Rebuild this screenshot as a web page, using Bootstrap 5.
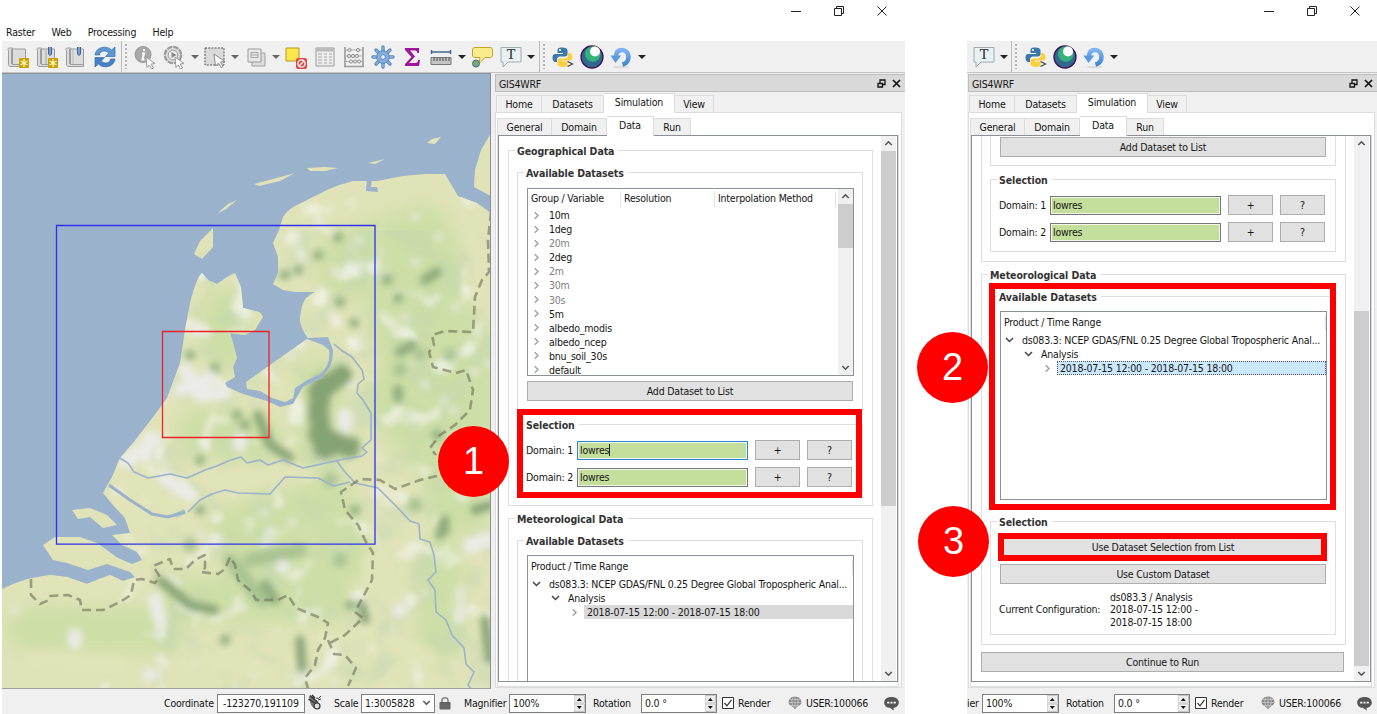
<!DOCTYPE html>
<html lang="en">
<head>
<meta charset="utf-8">
<title>GIS4WRF</title>
<link href="https://cdn.jsdelivr.net/npm/bootstrap@5.3.0/dist/css/bootstrap.min.css" rel="stylesheet">
<script src="https://cdn.jsdelivr.net/npm/bootstrap@5.3.0/dist/js/bootstrap.bundle.min.js"></script>
<style>
body{width:1377px;height:714px;overflow:hidden;background:#fff;color:#161616;font:10.5px/14px "DejaVu Sans Condensed","DejaVu Sans",sans-serif;letter-spacing:-.2px;white-space:nowrap}
svg{display:block;flex:none}
.win{height:714px;overflow:hidden}
.win-l{width:903px;margin-left:2px}
.win-r{width:410px;margin-left:62px}
.titlebar{height:22px;padding-right:17px}
.titlebar svg{width:12px;height:12px;margin-left:31px}
.menubar{height:19px;padding:3px 0 0 4px}
.menubar span{margin-right:16.3px}
.toolbar{height:32px;background:#f0f0f0;border-bottom:1px solid #c3c3c3;padding-left:1.5px}
.toolbar .ic{width:29px;display:flex;justify-content:center;flex:none}
.toolbar .ic svg{width:24px;height:24px}
.toolbar .dd{width:11.7px;display:flex;justify-content:center;flex:none}
.toolbar .dd:before{content:"";border:4px solid transparent;border-top:4px solid #222;border-bottom:0}
.toolbar .dd.off:before{border-top-color:#666}
.grip{width:11.4px;flex:none;height:31px;display:flex}
.grip:before{content:"";width:1px;height:31px;margin-left:1.5px;background:#bcbcbc}
.grip:after{content:"";width:2px;height:25px;margin:3px 0 0 3px;background:repeating-linear-gradient(#b4b4b4 0 2px,#f0f0f0 2px 4px)}
.work{height:617px;background:#f0f0f0}
.mapbox{width:489px;height:616px;border-top:1px solid #8f949c;border-right:1px solid #8a8f99;border-bottom:1px solid #a0a0a0;overflow:hidden}
.dock{width:410px}
.dock-title{height:18px;margin-top:1px;background:#d9d9d9;border:1px solid #bdbdbd;border-right:0;padding:1px 4px 0 3px}
.dock-title svg{width:9px;height:9px;margin-left:6px}
.tabs{height:20px}
.tabs span{height:17px;line-height:15px;background:#f0f0f0;border:1px solid #dcdcdc;border-bottom:0;border-left:0;text-align:center;flex:none;padding-top:1px}
.tabs span:first-child{border-left:1px solid #dcdcdc}
.tabs .on{height:20px;background:#fff;position:relative;margin-bottom:-1px;padding-top:1px}
.pane1{width:407px;height:576px;border:1px solid #dcdcdc;background:#fff;padding:2px 0 0 1px}
.pane2{width:402px;height:552px;border:1px solid #dcdcdc;border-top:0}
.scroller{width:400px;height:547px;border:1px solid #8b8f98;background:#fff;overflow:hidden}
.content{width:382px;height:545px;overflow:hidden;padding-left:9px}
.sbar{width:15px;background:#f0f0f0;display:flex;flex-direction:column;flex:none}
.sbar svg{width:15px;height:15px}
.sbar i{display:block;background:#cdcdcd}
.gbox{border:1px solid #dedede}
.gbox>b{display:block;height:0;margin-left:6px}
.gbox>b>span{display:inline-block;position:relative;top:-7px;background:#fff;padding:0 4px 0 2px;letter-spacing:-.08px;color:#333}
.outer{width:365px}
.inner{width:346px;margin-left:8px;padding:0 9px}
.tree{border:1px solid #8b909b;background:#fff;width:327px}
.tree .hd span{border-right:1px solid #e3e3e3;height:16px;flex:none}
.row14{height:14.08px;display:flex;align-items:center}
.row14 svg{width:9px;height:9px}
.dim{color:#808080}
.push{display:block;background:#e1e1e1;border:1px solid #adadad;color:#161616;text-align:center;height:20px;line-height:18px;width:326px}
.small-push{width:45px}
.fld{width:171px;height:19px;line-height:17px;background:#c4df9b;border:1px solid #777;box-shadow:inset 0 0 0 1px #f2f7ea;padding-left:2px}
.fld.focus{border-color:#2c83d8}
.status{height:24px;background:#f0f0f0;padding-top:4px}
.status>*{flex:none;height:19px;line-height:19px}
.edit{background:#fff;border:1px solid #7f7f7f;line-height:17px!important;padding-left:3px}
.spin{display:flex;justify-content:space-between}
.spin svg{width:11px;height:17px}
.frame{position:absolute;border:6px solid red}
.ball{position:absolute;width:71px;height:71px;border-radius:50%;background:red;color:#fff;font:38px/71px "Liberation Sans",sans-serif;text-align:center;letter-spacing:0}
</style>
</head>
<body class="position-relative">
<svg width="0" height="0" class="position-absolute">
<defs>
<linearGradient id="gb" x1="0" y1="0" x2="0" y2="1"><stop offset="0" stop-color="#7fb2f0"/><stop offset="1" stop-color="#3f86d8"/></linearGradient>
<symbol id="scroll" viewBox="0 0 24 24"><path d="M3.500 3h3v16.500h13V4H6.500M3.500 3c-2 0-2 2-1 2.500v14c0 1.500 1 2 2.500 2h14.500v-2" fill="#dcdcdc" stroke="#9c9c9c"/><path d="M5.500 4v15" stroke="#a0a0a0"/></symbol>
<symbol id="star" viewBox="0 0 10 10"><rect width="10" height="10" rx="1" fill="#c8a000"/><path d="M5 1v8M1.500 3l7 4M8.500 3l-7 4" stroke="#fff8c0" stroke-width="1.300"/></symbol>
<symbol id="newlay" viewBox="0 0 24 24"><use href="#scroll"/><use href="#star" x="13" y="13" width="10" height="10"/></symbol>
<symbol id="pin" viewBox="0 0 24 24"><path d="M13.500 2v7q1.500 3 3 0V2" fill="#7ba0cc" stroke="#3d6596"/></symbol>
<symbol id="newmark" viewBox="0 0 24 24"><use href="#scroll"/><path d="M11 5v14" stroke="#aaa"/><use href="#pin"/><use href="#star" x="13" y="13" width="10" height="10"/></symbol>
<symbol id="mark" viewBox="0 0 24 24"><use href="#scroll"/><path d="M9 5v14" stroke="#bbb"/><use href="#pin"/></symbol>
<symbol id="refresh" viewBox="0 0 24 24"><path d="M2 10C3 1.500 14 0 18.500 5L22 2v9.500h-9.500l3.200-3.500C12 4.500 7 6 6.500 10z" fill="#5f97d0" stroke="#346faf" stroke-width=".7"/><path d="M22 14C21 22.500 10 24 5.500 19L2 22v-9.500h9.500L8.300 16c3.700 3.500 8.700 2 9.200-2z" fill="#4682c3" stroke="#346faf" stroke-width=".7"/></symbol>
<symbol id="ptr" viewBox="0 0 24 24"><path d="M13 12l9 6.500-3.800.5 2.300 4-2 1-2.200-4-2.300 2.500z" fill="#fff" stroke="#999"/></symbol>
<symbol id="info" viewBox="0 0 24 24"><circle cx="10" cy="9.500" r="8" fill="#a9a9a9" stroke="#979797"/><path d="M11 4v2M9 8.500h2l-1.500 6h2" stroke="#fff" stroke-width="2" fill="none"/><use href="#ptr"/></symbol>
<symbol id="act" viewBox="0 0 24 24"><circle cx="11" cy="10" r="8" fill="#dcdcdc" stroke="#9b9b9b" stroke-width="2.600" stroke-dasharray="5.300 1"/><circle cx="11" cy="10" r="7" fill="#dcdcdc"/><circle cx="11" cy="10" r="4.800" fill="#eee" stroke="#999"/><path d="M9.500 7l5 3-5 3z" fill="#888"/><use href="#ptr"/></symbol>
<symbol id="sel" viewBox="0 0 24 24"><path d="M2 3h19v17H2z" fill="#dadada" stroke="#555" stroke-dasharray="2 1.200"/><path d="M11 9l11 7.500-4.500.5 2.500 4.500-2 1-2.500-4.500-3 3z" fill="#fff" stroke="#888"/></symbol>
<symbol id="form" viewBox="0 0 24 24"><path d="M8 8h13v13H8z" fill="#ddd" stroke="#a0a0a0"/><path d="M4 4h13v13H4z" fill="#e8e8e8" stroke="#9a9a9a"/><path d="M7 7.500h7v5H7zM7 10h7" fill="none" stroke="#a5a5a5"/></symbol>
<symbol id="desel" viewBox="0 0 24 24"><path d="M2 3h13v13H2z" fill="#fbe64b" stroke="#b89b1a"/><rect x="12" y="13" width="11" height="11" rx="2" fill="#e04848"/><circle cx="17.500" cy="18.500" r="3.600" fill="none" stroke="#fff" stroke-width="1.300"/><path d="M15 21l5-5" stroke="#fff" stroke-width="1.300"/></symbol>
<symbol id="tab" viewBox="0 0 24 24"><path d="M3 3h18v18H3z" fill="#ececec" stroke="#9a9a9a"/><path d="M3 5h18" stroke="#bbb" stroke-width="3"/><path d="M5 9h4M11 9h3M16 9h3M5 12h4M11 12h3M16 12h3M5 15h4M11 15h3M16 15h3M5 18h4M11 18h3M16 18h3" stroke="#aaa"/></symbol>
<symbol id="abac" viewBox="0 0 24 24"><path d="M3 2v20M21 2v20M2 21.500h20" stroke="#9a9a9a" stroke-width="1.600"/><path d="M3 5h18M3 11h18M3 16.500h18" stroke="#aaa"/><g fill="#e8e8e8" stroke="#8f8f8f"><circle cx="7.500" cy="5" r="1.600"/><circle cx="16" cy="5" r="1.600"/><circle cx="7" cy="11" r="1.600"/><circle cx="11" cy="11" r="1.600"/><circle cx="15" cy="11" r="1.600"/><circle cx="9" cy="16.500" r="1.600"/><circle cx="13" cy="16.500" r="1.600"/><circle cx="17" cy="16.500" r="1.600"/></g></symbol>
<symbol id="gear" viewBox="0 0 24 24"><path d="M12 2v20M2 12h20M5 5l14 14M19 5L5 19" stroke="#5588c4" stroke-width="3.400" stroke-linecap="round"/><path d="M12 2.500v19M2.500 12h19M5.300 5.300l13.400 13.400M18.700 5.300L5.300 18.700" stroke="#86addb" stroke-width="1.800" stroke-linecap="round"/><circle cx="12" cy="12" r="6.300" fill="#86addb" stroke="#5588c4"/><circle cx="12" cy="12" r="2.400" fill="#f0f0f0" stroke="#5588c4"/></symbol>
<symbol id="sigma" viewBox="0 0 24 24"><path d="M5 3h14v5h-1.500c-.5-2-1.500-2.500-3-2.500H10l5 6-6 6.500h6c2 0 2.800-1 3.300-3H20l-1 6H5v-2l6.500-7L5 5z" fill="#a0149a"/></symbol>
<symbol id="ruler" viewBox="0 0 24 24"><path d="M2.500 7h19M2.500 5v4M21.500 5v4" stroke="#44678f" stroke-width="1.500"/><path d="M2 12.500h20v7H2z" fill="#c4c4c4" stroke="#777"/><path d="M5 13v3M8 13v3M11 13v3M14 13v3M17 13v3M20 13v3" stroke="#444"/></symbol>
<symbol id="tip" viewBox="0 0 24 24"><path d="M5 2.500h15c1.500 0 2.500 1 2.500 2.500v5c0 1.500-1 2.500-2.500 2.500h-5l-6 6 1-6H5c-1.500 0-2.500-1-2.500-2.500V5c0-1.500 1-2.500 2.500-2.500z" fill="#faec8c" stroke="#c2a52c"/><circle cx="6" cy="18.500" r="3.500" fill="#79a877" stroke="#4c6f80"/></symbol>
<symbol id="txt" viewBox="0 0 24 24"><path d="M2 2.500h20v14.500H9l-5 5v-5H2z" fill="#e8f1f4" stroke="#a0abae"/><text x="12" y="14" font-family="Liberation Serif,serif" font-size="14" text-anchor="middle" fill="#333" stroke="#333" stroke-width=".2">T</text></symbol>
<symbol id="py" viewBox="0 0 24 24"><path d="M11 2.500c-4 0-4.500 1.500-4.500 3V8h5.500v1H4.500C2 9 1.500 11 1.500 13s1 4 3 4H6v-2.500C6 12.500 7.500 11.500 9 11.500h5c1.500 0 2.500-1 2.500-2.500V5.500c0-2-2-3-5.500-3z" fill="#3b77a8"/><path d="M12 22c4 0 4.500-1.500 4.500-3v-2.500H11v-1h7.500c2.500 0 3-1.500 3-3.500s-1-4-3-4H17v2.500c0 2-1.500 3-3 3H9C7.500 13.500 6.500 14.500 6.500 16v3c0 2 2 3 5.500 3z" fill="#fbd03f"/><circle cx="9" cy="5" r="1" fill="#fff"/><path d="M16.500 16.500l5 2.500-5 2.500" fill="none" stroke="#444" stroke-width="1.300"/></symbol>
<symbol id="orb" viewBox="0 0 24 24"><circle cx="12" cy="12" r="11" fill="#30688e" stroke="#431058" stroke-width="1.300"/><circle cx="12.800" cy="9" r="7.800" fill="#35b27c"/><circle cx="15" cy="6.500" r="5" fill="#fff"/></symbol>
<symbol id="undo" viewBox="0 0 24 24"><ellipse cx="12" cy="22" rx="8" ry="1.300" fill="#dcdcdc"/><path d="M13.500 19.500C22 17.500 21 5 13 5 9 5 7.200 7.500 7 11" fill="none" stroke="url(#gb)" stroke-width="4.600"/><path d="M1.500 10.500h10.800l-5.800 7.500z" fill="#5b98e2"/></symbol>
<symbol id="min" viewBox="0 0 12 12"><path d="M1 6.500h10" stroke="#222"/></symbol>
<symbol id="max" viewBox="0 0 12 12"><path d="M1.500 3.500h7v7h-7zM3.500 3V1.500h7v7H9" fill="none" stroke="#222"/></symbol>
<symbol id="cls" viewBox="0 0 12 12"><path d="M1.500 1.500l9 9M10.500 1.500l-9 9" stroke="#222"/></symbol>
<symbol id="float" viewBox="0 0 9 9"><path d="M3 1h5v4.500H3z" fill="none" stroke="#111" stroke-width="1.300"/><path d="M1 4.500h4.500v3.500H1z" fill="#d9d9d9" stroke="#111" stroke-width="1.300"/></symbol>
<symbol id="xx" viewBox="0 0 9 9"><path d="M1 1l7 7M8 1L1 8" stroke="#111" stroke-width="1.700"/></symbol>
<symbol id="up" viewBox="0 0 15 15"><path d="M4.300 9l3.200-3.200L10.700 9" fill="none" stroke="#555" stroke-width="1.600"/></symbol>
<symbol id="dn" viewBox="0 0 15 15"><path d="M4.300 6l3.200 3.200L10.700 6" fill="none" stroke="#555" stroke-width="1.600"/></symbol>
<symbol id="rt" viewBox="0 0 9 9"><path d="M2.700 1.200L6 4.500 2.700 7.800" fill="none" stroke="#a0a0a0" stroke-width="1.400"/></symbol>
<symbol id="ex" viewBox="0 0 9 9"><path d="M1 2L4.500 5.500 8 2" fill="none" stroke="#444" stroke-width="1.500"/></symbol>
<symbol id="spn" viewBox="0 0 11 17"><path d="M0 .5h10.500v7.500H0zM0 9h10.500v7.500H0z" fill="#ececec" stroke="#c4c4c4"/><path d="M2.800 6L5.300 3l2.500 3zM2.800 11L5.300 14l2.500-3z" fill="#111"/></symbol>
<symbol id="chk" viewBox="0 0 12 12"><path d="M.5.500h11v11H.5z" fill="#fff" stroke="#333"/><path d="M2.500 6l2.500 2.800 4.500-6" fill="none" stroke="#333" stroke-width="1.200"/></symbol>
<symbol id="globe" viewBox="0 0 14 14"><path d="M7 .5c4 0 6.500 3 6.500 6 0 2-3 3.500-5 5L7 13.500l-1.500-2c-2-1.500-5-3-5-5 0-3 2.500-6 6.500-6z" fill="#8b8b8b"/><path d="M.5 6.500h13M7 .5v12M2 3.500h10M2.500 9.500h9M4.500 1.500q-2 5 1 10M9.500 1.500q2 5-1 10" stroke="#d5d5d5" stroke-width=".6" fill="none"/></symbol>
<symbol id="say" viewBox="0 0 14 14"><path d="M7 1c4 0 6.800 2 6.800 5S11 11 9 11v2.500L5.500 11C2.500 11 .2 9 .2 6S3 1 7 1z" fill="#555"/><path d="M3 5.300h2v1.600H3zM6 5.300h2v1.600H6zM9 5.300h2v1.600H9z" fill="#fff"/></symbol>
<symbol id="mouse" viewBox="0 0 16 16"><path d="M2 2l4 1 5 6c2 3-1 6-4 5s-5-8-5-12z" fill="#777"/><path d="M3 1.500l8 7M1.500 5l8 5M5 1l3 3" stroke="#333" stroke-width="1.400"/><circle cx="10" cy="12" r="3" fill="#ddd" stroke="#333" stroke-width="1.200"/><path d="M9 4q2 2 5-2M11 6l3-1" stroke="#444" fill="none"/></symbol>
<symbol id="lock" viewBox="0 0 12 14"><path d="M3 6.500V4.500C3 .8 9 .8 9 4.500v2" fill="none" stroke="#888" stroke-width="1.600"/><rect x=".5" y="6" width="11" height="7.500" rx="1" fill="#5f5f5f"/><path d="M1 8h10M1 10h10M1 12h10" stroke="#777" stroke-width=".7"/></symbol>
</defs>
</svg>

<div class="d-flex">
<div class="win win-l">
 <div class="titlebar d-flex justify-content-end align-items-center"><svg><use href="#min"/></svg><svg><use href="#max"/></svg><svg><use href="#cls"/></svg></div>
 <div class="menubar d-flex"><span>Raster</span><span>Web</span><span>Processing</span><span>Help</span></div>
 <div class="toolbar d-flex align-items-center">
  <div class="ic"><svg><use href="#newlay"/></svg></div><div class="ic"><svg><use href="#newmark"/></svg></div><div class="ic"><svg><use href="#mark"/></svg></div><div class="ic"><svg><use href="#refresh"/></svg></div>
  <div class="grip"></div>
  <div class="ic"><svg><use href="#info"/></svg></div><div class="ic"><svg><use href="#act"/></svg></div><div class="dd off"></div>
  <div class="ic"><svg><use href="#sel"/></svg></div><div class="dd off"></div><div class="ic"><svg><use href="#form"/></svg></div><div class="dd off"></div>
  <div class="ic"><svg><use href="#desel"/></svg></div><div class="ic"><svg><use href="#tab"/></svg></div><div class="ic"><svg><use href="#abac"/></svg></div><div class="ic"><svg><use href="#gear"/></svg></div><div class="ic"><svg><use href="#sigma"/></svg></div><div class="ic"><svg><use href="#ruler"/></svg></div><div class="dd"></div>
  <div class="ic"><svg><use href="#tip"/></svg></div><div class="ic"><svg><use href="#txt"/></svg></div><div class="dd"></div>
  <div class="grip"></div>
  <div class="ic"><svg><use href="#py"/></svg></div><div class="ic"><svg><use href="#orb"/></svg></div><div class="ic"><svg><use href="#undo"/></svg></div><div class="dd"></div>
 </div>
 <div class="work d-flex">
  <div class="mapbox me-1">
   <svg width="489" height="615" viewBox="2 74 489 615">
    <defs>
     <clipPath id="land"><path d="M491 213L477 203 458 196Q452 186 445 174L425 174 403 176 377 181 353 181Q340 184 327 190L297 205Q287 210 283 217L279 230 273 243 278 257 278 273 273 284 283 290 295 292 315 292Q305 296 302 306L300 317Q299 326 308 338L328 337 333 350Q333 360 330 367L322 378 303 387 297 397 293 404 280 407 267 401 243 394 227 387 225 383 235 377 233 367 237 358 233 343 230 333 245 335 255 330 263 317Q261 311 255 311L243 308 241 287 235 273 227 277 217 284 208 280 202 273Q197 276 190 303L185 330 180 363 167 398Q160 408 153 417L133 443 120 458 112 477 103 493 113 505 125 518 130 533 112 535 122 545 137 552 142 560 132 564 118 558 97 543 80 537 55 537 43 545 53 560 67 563 88 570 107 564 130 572 135 577 123 581 110 575Q98 579 87 584L67 577 50 575 27 579Q14 583 2 589V690H491z"/><path d="M307 339L287 353 263 370 246 382 247 389 260 391 272 398 285 402 293 398 295 388 307 380 320 374Q331 365 329 350L323 345zM491 133L481 150 475 170 474 187 491 196zM213 228V247L202 259 194 254 200 241zM218 213L228 204 237 200 226 209zM254 184L273 179 295 173 280 181 259 186zM307 168L325 167 338 168 325 171 310 171zM368 163L385 159 375 164zM427 143L432 139 441 137 435 144zM72 510L90 508 107 515 117 525 103 528 90 517 78 519z"/></clipPath>
     <filter id="b3" x="-20%" y="-20%" width="140%" height="140%"><feGaussianBlur stdDeviation="3.500"/></filter>
     <filter id="b6" x="-20%" y="-20%" width="140%" height="140%"><feGaussianBlur stdDeviation="9"/></filter>
     <filter id="b1"><feGaussianBlur stdDeviation=".7"/></filter>
     <filter id="ng" x="0" y="0" width="100%" height="100%"><feTurbulence type="fractalNoise" baseFrequency=".032" numOctaves="2" seed="7"/><feColorMatrix values="0 0 0 0 .55  0 0 0 0 .67  0 0 0 0 .45  3.800 0 0 0 -1.850"/><feGaussianBlur stdDeviation="1.500"/></filter>
     <filter id="nw" x="0" y="0" width="100%" height="100%"><feTurbulence type="fractalNoise" baseFrequency=".035" numOctaves="2" seed="23"/><feColorMatrix values="0 0 0 0 .92  0 0 0 0 .92  0 0 0 0 .9  0 5 0 0 -2.900"/><feGaussianBlur stdDeviation="2"/></filter>
    </defs>
    <path fill="#9ab2cc" d="M2 74h489v615H2z"/>
    <g filter="url(#b1)"><g clip-path="url(#land)">
     <path fill="#e0e3b8" d="M2 74h489v615H2z"/>
     <g filter="url(#b6)" fill="none" stroke="#cddea6" stroke-linecap="round" stroke-linejoin="round"><path stroke-width="70" d="M350 265L420 240 445 330 400 400 440 450 400 300M460 350V500"/><path stroke-width="46" d="M200 430L260 440M230 530L330 500 350 560 250 560M180 600L330 600M30 630H160M440 560V640M225 310V345M320 380V450"/></g>
     <path filter="url(#ng)" opacity=".5" d="M150 230h341v459H150z"/>
     <path filter="url(#nw)" opacity=".7" d="M100 190h391v499H100z"/>
     <g filter="url(#b3)" fill="none" stroke-linecap="round" stroke-linejoin="round">
      <path stroke="#86a374" stroke-width="20" d="M318 392L342 375M322 385L318 412 324 450M318 435L350 448"/>
      <path stroke="#86a374" stroke-width="9" d="M345 378L320 395M258 415L270 445 290 458M330 452L355 442M445 520L440 535M160 580L190 605 215 610M300 640L302 668M365 620L362 605M485 620L490 660M475 510L490 505"/>
      <path stroke="#8dab7d" stroke-width="10" d="M338 237h.1M318 255h.1M387 280h.1M354 323h.1M340 302h.1M298 270h.1M285 275h.1M425 280L437 272M398 298h.1M400 352L412 345M398 390V398M437 435h.1M200 460h.1M200 510h.1M355 510h.1M445 530h.1M245 425h.1M237 415h.1M265 585L275 600M225 640h.1M350 605h.1M190 355h.1M215 368h.1"/>
      <path stroke="#a9c392" stroke-width="14" d="M250 560L300 550M230 560L262 600M420 355h.1M450 355h.1M340 560h.1M190 545h.1M400 370h.1M330 480h.1M415 505h.1"/>
      <path stroke="#ebebe8" stroke-width="14" d="M198 330h.1M185 370L200 395 225 392M210 378L180 390M125 462L155 440M150 438L145 455M165 478L190 495M283 567h.1M75 635V642M215 540h.1M155 600L160 620M150 675h.1M470 545L488 540M400 610h.1M240 445V440M345 415V425"/>
      <path stroke="#e6e8dc" stroke-width="8" d="M415 217h.1M438 237h.1M415 262h.1M358 240h.1M405 317h.1M456 307h.1M475 372h.1M425 385h.1M453 410h.1M265 513h.1M200 535h.1M292 522h.1M460 590V620M15 610h.1M320 222h.1M335 270h.1M290 355h.1"/>
      <path stroke="#e1e3b8" stroke-width="16" d="M125 475L160 500 180 505M120 500L145 520M40 580L100 590 120 580M210 480L300 472M30 660L120 665M200 660L270 670M370 560V580M390 640L430 660M480 250V300"/>
     </g>
     <path fill="none" stroke="#9ab2cc" stroke-width="3" d="M109 485L130 500 152 514 168 517 185 512"/>
     <path fill="#9ab2cc" d="M367 178L366 191 378 192 377 187 371 187 372 178z"/>
    </g></g>
    <g fill="none" stroke="#9ab2cc" stroke-width="1.600" stroke-linejoin="round">
     <path d="M118 457L128 463 134 472 148 478 170 474 187 478 205 470 217 466 228 461 241 457 247 463 260 460 268 465 283 460 303 468 335 461 345 459 362 456 367 452 362 448 371 440 371 413 363 400 357 393 358 384 364 379 362 370 352 357 341 350 334 344 M188 512L200 500 212 494 225 490 238 493 270 494 285 477 318 478 334 486 350 482 M336 460L345 472 355 483 378 488 390 500 398 508 410 521 419 524 420 539 430 542 434 555 436 572 428 580 435 590 436 612 446 620 452 635 464 648 466 664 474 672 468 685 472 690"/>
     <path stroke-width="5" d="M185 511L175 516" opacity=".5"/>
    </g>
    <g fill="none" stroke="#6f7358" stroke-opacity=".62" stroke-width="2.600" stroke-dasharray="9 5" stroke-linejoin="round">
     <path d="M491 212L488 240 489 272 482 280 475 297 473 332 445 331 432 335 434 345 429 352 433 367 456 373 466 370 473 390 470 410 455 425 440 435 430 448 436 455M437 476L420 480 395 489 380 480 360 479 341 492 345 510 358 525 365 540 373 553 372 580 355 612 363 618 345 635 328 644M31 579V595L40 604 49 600 50 596 68 595 80 600 82 610 103 610 120 602 131 595 134 580 142 579 155 583 160 577 153 566 170 559 173 569 186 569 195 560 205 555 205 568 201 572 218 574 225 569 230 557 235 565 238 580 252 592 256 600 278 600 288 595 296 608 318 617 328 623 325 638 318 650 315 665 305 678 308 689M328 640L334 654 345 655 356 668 348 686"/>
    </g>
    <path d="M56.500 225.500h318.500v318.700H56.500z" fill="none" stroke="#3030ee" stroke-width="1.300"/>
    <path d="M162.500 331.500H269v106H162.500z" fill="none" stroke="#ee2028" stroke-width="1.300"/>
   </svg>
  </div>
  <div class="dock">
   <div class="dock-title d-flex align-items-center"><span class="me-auto">GIS4WRF</span><svg><use href="#float"/></svg><svg><use href="#xx"/></svg></div>
   <div class="tabs d-flex align-items-end ps-0" style="padding-top:2px"><span style="width:46px;margin-left:1px">Home</span><span style="width:62px">Datasets</span><span class="on" style="width:71px">Simulation</span><span style="width:39px">View</span></div>
   <div class="pane1">
    <div class="tabs d-flex align-items-end"><span style="width:55px">General</span><span style="width:55px">Domain</span><span class="on" style="width:47px">Data</span><span style="width:37px">Run</span></div>
    <div class="pane2">
     <div class="scroller d-flex">
      <div class="content">
       <div class="gbox outer" style="margin-top:14px;height:356px"><b><span>Geographical Data</span></b>
        <div class="gbox inner" style="margin-top:21px;height:239px"><b style="margin-left:-3px"><span>Available Datasets</span></b>
         <div class="tree d-flex" style="margin-top:15px;height:188px">
          <div class="flex-fill overflow-hidden">
           <div class="hd d-flex" style="margin:2px 0 1px"><span style="width:93px;padding-left:3px">Group / Variable</span><span style="width:94px;padding-left:3px">Resolution</span><span style="width:121px;padding-left:3px">Interpolation Method</span></div>
           <div class="row14"><svg class="ms-1 me-2"><use href="#rt"/></svg>10m</div>
           <div class="row14"><svg class="ms-1 me-2"><use href="#rt"/></svg>1deg</div>
           <div class="row14 dim"><svg class="ms-1 me-2"><use href="#rt"/></svg>20m</div>
           <div class="row14"><svg class="ms-1 me-2"><use href="#rt"/></svg>2deg</div>
           <div class="row14 dim"><svg class="ms-1 me-2"><use href="#rt"/></svg>2m</div>
           <div class="row14 dim"><svg class="ms-1 me-2"><use href="#rt"/></svg>30m</div>
           <div class="row14 dim"><svg class="ms-1 me-2"><use href="#rt"/></svg>30s</div>
           <div class="row14"><svg class="ms-1 me-2"><use href="#rt"/></svg>5m</div>
           <div class="row14"><svg class="ms-1 me-2"><use href="#rt"/></svg>albedo_modis</div>
           <div class="row14"><svg class="ms-1 me-2"><use href="#rt"/></svg>albedo_ncep</div>
           <div class="row14"><svg class="ms-1 me-2"><use href="#rt"/></svg>bnu_soil_30s</div>
           <div class="row14"><svg class="ms-1 me-2"><use href="#rt"/></svg>default</div>
          </div>
          <div class="sbar"><svg><use href="#up"/></svg><i style="height:44px"></i><svg class="mt-auto"><use href="#dn"/></svg></div>
         </div>
         <div class="push" style="margin-top:5px">Add Dataset to List</div>
        </div>
        <div class="gbox inner" style="margin-top:13px;height:73px"><b style="margin-left:-3px"><span>Selection</span></b>
         <div class="d-flex align-items-center" style="margin:15px 0 0 -1px;height:20px"><span style="width:51px">Domain: 1</span><span class="fld focus">lowres<span class="border-end border-dark"></span></span><span class="push small-push" style="margin-left:7px">+</span><span class="push small-push" style="margin-left:7px">?</span></div>
         <div class="d-flex align-items-center" style="margin:7px 0 0 -1px;height:20px"><span style="width:51px">Domain: 2</span><span class="fld">lowres</span><span class="push small-push" style="margin-left:7px">+</span><span class="push small-push" style="margin-left:7px">?</span></div>
        </div>
       </div>
       <div class="gbox outer" style="margin-top:12px;height:380px"><b><span>Meteorological Data</span></b>
        <div class="gbox inner" style="margin-top:21px;height:239px"><b style="margin-left:-3px"><span>Available Datasets</span></b>
         <div class="tree" style="margin-top:14px;height:189px">
          <div class="hd d-flex" style="margin:3px 0 2px"><span style="width:325px;padding-left:3px">Product / Time Range</span></div>
          <div class="row14"><svg class="ms-1 me-2"><use href="#ex"/></svg>ds083.3: NCEP GDAS/FNL 0.25 Degree Global Tropospheric Anal...</div>
          <div class="row14"><svg style="margin:0 8px 0 23px"><use href="#ex"/></svg>Analysis</div>
          <div class="row14"><svg style="margin:0 5px 0 42px"><use href="#rt"/></svg><span class="flex-fill" style="background:#d9d9d9;padding-left:3px">2018-07-15 12:00 - 2018-07-15 18:00</span></div>
         </div>
        </div>
       </div>
      </div>
      <div class="sbar"><svg><use href="#up"/></svg><i style="height:355px"></i><svg class="mt-auto"><use href="#dn"/></svg></div>
     </div>
    </div>
   </div>
  </div>
 </div>
 <div class="status d-flex">
  <span style="width:53px;margin-left:162px">Coordinate</span><span class="edit" style="width:88px;padding-left:5px">-123270,191109</span><svg width="16" height="16" style="margin-left:2px;height:16px"><use href="#mouse"/></svg>
  <span style="width:27px;margin-left:11px">Scale</span><span class="edit d-flex justify-content-between" style="width:74px">1:3005828<svg width="15" height="15" class="mt-0"><use href="#dn"/></svg></span><svg width="12" height="14" style="margin:2px 0 0 4px;height:14px"><use href="#lock"/></svg>
  <span style="width:45px;margin-left:13px">Magnifier</span><span class="edit spin" style="width:77px">100%<svg><use href="#spn"/></svg></span>
  <span style="width:48px;margin-left:7px">Rotation</span><span class="edit spin" style="width:76px">0.0 °<svg><use href="#spn"/></svg></span>
  <svg width="12" height="12" style="margin:3px 0 0 5px;height:12px"><use href="#chk"/></svg><span style="width:50px;margin-left:4px">Render</span><svg width="14" height="14" style="margin:2px 4px 0 0;height:14px"><use href="#globe"/></svg><span style="width:78px">USER:100066</span><svg width="15" height="15" style="margin-top:2px;height:15px"><use href="#say"/></svg>
 </div>
</div>

<div class="win win-r">
 <div class="titlebar d-flex justify-content-end align-items-center" style="padding-right:16px"><svg><use href="#min"/></svg><svg><use href="#max"/></svg><svg><use href="#cls"/></svg></div>
 <div class="menubar"></div>
 <div class="toolbar d-flex align-items-center" style="padding-left:2px"><div class="ic"><svg><use href="#txt"/></svg></div><div class="dd"></div><div class="grip"></div><div class="ic"><svg><use href="#py"/></svg></div><div class="ic"><svg><use href="#orb"/></svg></div><div class="ic"><svg><use href="#undo"/></svg></div><div class="dd"></div></div>
 <div class="work d-flex" style="padding-left:1px">
  <div class="dock">
   <div class="dock-title d-flex align-items-center"><span class="me-auto">GIS4WRF</span><svg><use href="#float"/></svg><svg><use href="#xx"/></svg></div>
   <div class="tabs d-flex align-items-end" style="padding-top:2px"><span style="width:46px;margin-left:1px">Home</span><span style="width:62px">Datasets</span><span class="on" style="width:71px">Simulation</span><span style="width:39px">View</span></div>
   <div class="pane1">
    <div class="tabs d-flex align-items-end"><span style="width:55px">General</span><span style="width:55px">Domain</span><span class="on" style="width:47px">Data</span><span style="width:37px">Run</span></div>
    <div class="pane2">
     <div class="scroller d-flex">
      <div class="content">
       <div class="gbox outer border-top-0" style="height:126px">
        <div class="gbox inner border-top-0 overflow-hidden" style="height:30px"><div class="push" style="margin-top:1px">Add Dataset to List</div></div>
        <div class="gbox inner" style="margin-top:13px;height:73px"><b style="margin-left:-3px"><span>Selection</span></b>
         <div class="d-flex align-items-center" style="margin:15px 0 0 -1px;height:20px"><span style="width:51px">Domain: 1</span><span class="fld">lowres</span><span class="push small-push" style="margin-left:7px">+</span><span class="push small-push" style="margin-left:7px">?</span></div>
         <div class="d-flex align-items-center" style="margin:7px 0 0 -1px;height:20px"><span style="width:51px">Domain: 2</span><span class="fld">lowres</span><span class="push small-push" style="margin-left:7px">+</span><span class="push small-push" style="margin-left:7px">?</span></div>
        </div>
       </div>
       <div class="gbox outer" style="margin-top:12px;height:371px"><b><span>Meteorological Data</span></b>
        <div class="gbox inner" style="margin-top:21px;height:212px"><b style="margin-left:-3px"><span>Available Datasets</span></b>
         <div class="tree" style="margin-top:14px;height:189px">
          <div class="hd d-flex" style="margin:3px 0 2px"><span style="width:325px;padding-left:3px">Product / Time Range</span></div>
          <div class="row14"><svg class="ms-1 me-2"><use href="#ex"/></svg>ds083.3: NCEP GDAS/FNL 0.25 Degree Global Tropospheric Anal...</div>
          <div class="row14"><svg style="margin:0 8px 0 23px"><use href="#ex"/></svg>Analysis</div>
          <div class="row14"><svg style="margin:0 5px 0 42px"><use href="#rt"/></svg><span class="flex-fill" style="background:#cce8ff;outline:1px dotted #555;outline-offset:-1px;padding-left:3px">2018-07-15 12:00 - 2018-07-15 18:00</span></div>
         </div>
        </div>
        <div class="gbox inner" style="margin-top:13px;height:114px"><b style="margin-left:-3px"><span>Selection</span></b>
         <div class="push" style="margin-top:15px">Use Dataset Selection from List</div>
         <div class="push" style="margin-top:7px">Use Custom Dataset</div>
         <div class="d-flex align-items-center" style="margin:7px 0 0 -1px;line-height:12.300px"><span style="width:111px">Current Configuration:</span><span>ds083.3 / Analysis<br>2018-07-15 12:00 -<br>2018-07-15 18:00</span></div>
        </div>
       </div>
       <div class="push" style="width:363px;margin-top:7px">Continue to Run</div>
      </div>
      <div class="sbar"><svg><use href="#up"/></svg><i style="height:356px;margin-top:160px"></i><svg class="mt-auto"><use href="#dn"/></svg></div>
     </div>
    </div>
   </div>
  </div>
 </div>
 <div class="status d-flex">
  <span style="width:11px;margin-right:4px">ier</span><span class="edit spin" style="width:77px">100%<svg><use href="#spn"/></svg></span>
  <span style="width:48px;margin-left:7px">Rotation</span><span class="edit spin" style="width:76px">0.0 °<svg><use href="#spn"/></svg></span>
  <svg width="12" height="12" style="margin:3px 0 0 5px;height:12px"><use href="#chk"/></svg><span style="width:50px;margin-left:4px">Render</span><svg width="14" height="14" style="margin:2px 4px 0 0;height:14px"><use href="#globe"/></svg><span style="width:78px">USER:100066</span><svg width="15" height="15" style="margin-top:2px;height:15px"><use href="#say"/></svg>
 </div>
</div>
</div>

<div class="frame" style="left:517px;top:409px;width:345px;height:89px"></div>
<div class="frame" style="left:989px;top:283px;width:347px;height:227px"></div>
<div class="frame" style="left:998px;top:533px;width:329px;height:28px"></div>
<div class="ball" style="left:438px;top:426px">1</div>
<div class="ball" style="left:917px;top:332px">2</div>
<div class="ball" style="left:918px;top:506px">3</div>
</body>
</html>
